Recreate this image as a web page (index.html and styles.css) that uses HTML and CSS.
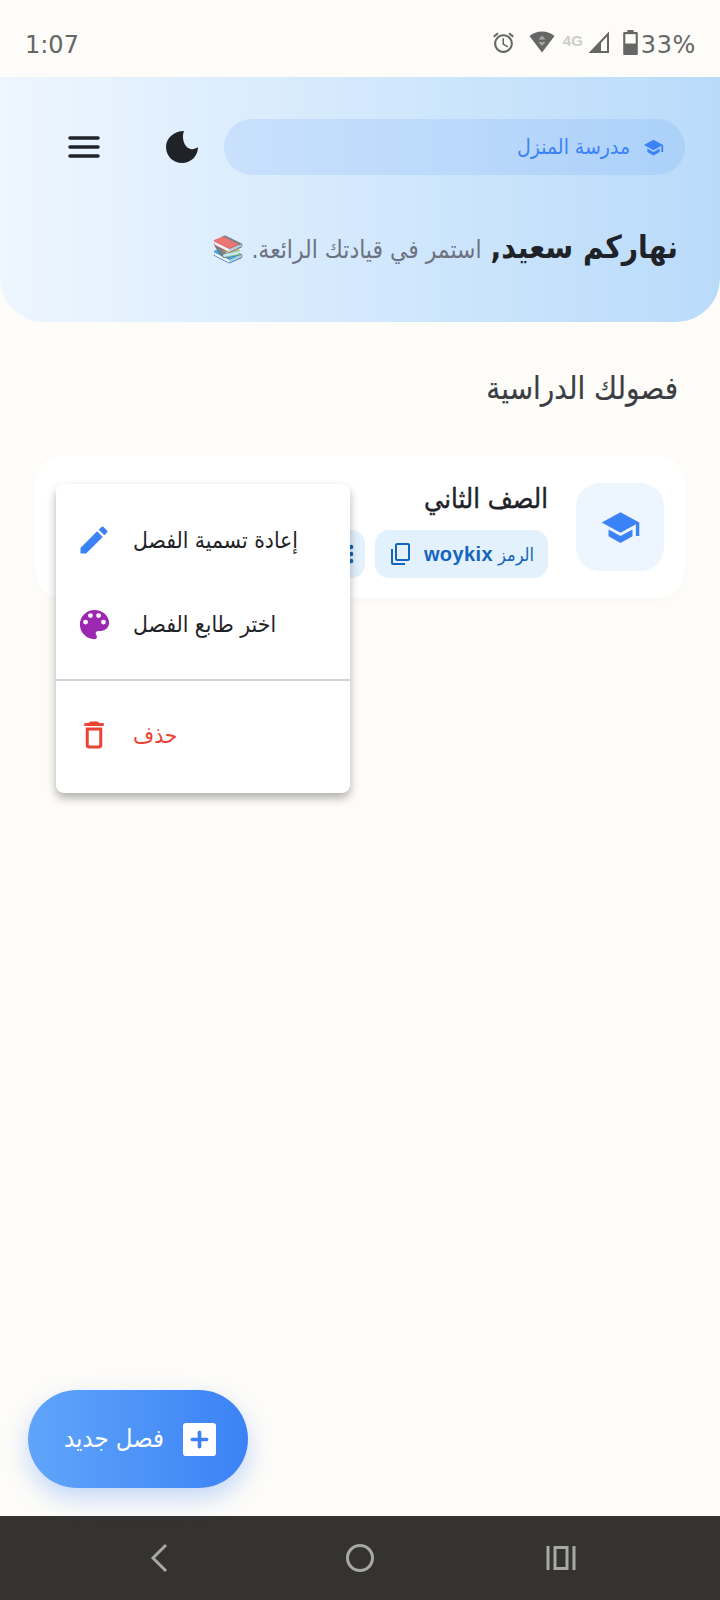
FILE: index.html
```html
<!DOCTYPE html>
<html lang="ar">
<head>
<meta charset="utf-8">
<title>مدرسة المنزل</title>
<link rel="stylesheet" href="styles.css">
</head>
<body>
<div class="screen">
  <div class="status" dir="ltr">
    <span class="time">1:07</span>
    <div class="status-icons">
      <svg class="alarm" viewBox="0 0 24 24" width="25" height="25"><path fill="#666" d="M22 5.720l-4-3.400-1.300 1.530 4 3.400L22 5.720zM7.300 3.850L6 2.320l-4 3.400 1.300 1.530 4-3.400zM12.500 8H11v6l4.750 2.850.75-1.230-4-2.370V8zM12 4c-4.970 0-9 4.030-9 9s4.030 9 9 9 9-4.030 9-9-4.030-9-9-9zm0 16c-3.870 0-7-3.130-7-7s3.130-7 7-7 7 3.130 7 7-3.130 7-7 7z"/></svg>
      <svg viewBox="0 0 26 22" width="26" height="22"><path fill="#666" d="M13 0.500C8 0.500 4 2 0.500 5L13 21.500 25.500 5C22 2 18 0.500 13 0.500z"/><path fill="#a5a5a3" d="M13 4.500l-3.500 4h7zM13 15l-3.500-4h7z"/></svg>
      <span class="net">4G</span>
      <svg class="sig" viewBox="0 0 22 22" width="22" height="22"><path fill="none" stroke="#666" stroke-width="2" d="M20 3V21H3z"/><path fill="#666" d="M1 22L13 10V22z"/></svg>
      <svg viewBox="0 0 14 24" width="15" height="25"><path fill="#666" d="M4 0h6v2h3a1 1 0 0 1 1 1v20a1 1 0 0 1-1 1H1a1 1 0 0 1-1-1V3a1 1 0 0 1 1-1h3z"/><rect x="2" y="4" width="10" height="9" fill="#fdfcf9"/></svg>
      <span class="pct">33%</span>
    </div>
  </div>

  <header class="hero" dir="rtl">
    <div class="topbar">
      <div class="brand">
        <svg viewBox="0 0 24 24" width="21" height="21"><path fill="#3b82f6" d="M5 13.180v4L12 21l7-3.820v-4L12 17l-7-3.820zM12 3L1 9l11 6 9-4.910V17h2V9L12 3z"/></svg>
        <span>مدرسة المنزل</span>
      </div>
      <svg class="moon" viewBox="0 0 34 34" width="34" height="34"><path fill="#1f2328" d="M19 1C9 1 1 8 1 17c0 9 7 16 16 16s16-7 16-16c-4 3-9 3-12-1-3-4-4-10-2-15z"/></svg>
      <svg class="menu-btn" viewBox="0 0 32 24" width="32" height="24"><path stroke="#1f2328" stroke-width="3.500" stroke-linecap="round" d="M2 3h28M2 12h28M2 21h28"/></svg>
    </div>
    <p class="greeting"><strong>نهاركم سعيد,</strong> <span>استمر في قيادتك الرائعة.</span> <span class="emoji">📚</span></p>
  </header>

  <main class="content" dir="rtl">
    <h2 class="section-title">فصولك الدراسية</h2>
    <article class="card">
      <div class="card-icon">
        <svg viewBox="0 0 24 24" width="41" height="41"><path fill="#3b82f6" d="M5 13.180v4L12 21l7-3.820v-4L12 17l-7-3.820zM12 3L1 9l11 6 9-4.910V17h2V9L12 3z"/></svg>
      </div>
      <div class="card-body">
        <h3 class="card-title">الصف الثاني</h3>
        <div class="chips">
          <div class="chip">
            <span class="chip-label">الرمز</span>
            <span class="chip-code">woykix</span>
            <svg viewBox="0 0 24 24" width="24" height="24"><path fill="#1565c0" d="M16 1H4c-1.100 0-2 .9-2 2v14h2V3h12V1zm3 4H8c-1.100 0-2 .9-2 2v14c0 1.100.9 2 2 2h11c1.100 0 2-.9 2-2V7c0-1.100-.9-2-2-2zm0 16H8V7h11v14z" transform="matrix(1 0 0 -1 0 24)"/></svg>
          </div>
          <div class="chip chip-more">
            <svg viewBox="0 0 24 24" width="28" height="28"><path fill="#1565c0" d="M12 8a2 2 0 1 0 0-4 2 2 0 0 0 0 4zm0 2a2 2 0 1 0 0 4 2 2 0 0 0 0-4zm0 6a2 2 0 1 0 0 4 2 2 0 0 0 0-4z"/></svg>
          </div>
        </div>
      </div>
    </article>
  </main>

  <div class="popup">
    <div class="popup-item">
      <svg viewBox="0 0 24 24" width="36" height="36"><path fill="#3b82f6" d="M3 17.250V21h3.750L17.810 9.940l-3.750-3.750L3 17.250zM20.710 7.040a1 1 0 0 0 0-1.410l-2.340-2.340a1 1 0 0 0-1.410 0l-1.830 1.830 3.750 3.750 1.830-1.830z"/></svg>
      <span class="popup-label">إعادة تسمية الفصل</span>
    </div>
    <div class="popup-item item-second">
      <svg class="palette" viewBox="0 0 24 24" width="39" height="39"><path fill="#9c27b0" d="M12 3a9 9 0 0 0 0 18c.83 0 1.500-.67 1.500-1.500 0-.39-.15-.74-.39-1.010-.23-.26-.38-.61-.38-.99 0-.83.67-1.500 1.500-1.500H16a5 5 0 0 0 5-5c0-4.420-4.030-8-9-8zm-5.500 9a1.500 1.500 0 1 1 0-3 1.500 1.500 0 0 1 0 3zm3-4a1.500 1.500 0 1 1 0-3 1.500 1.500 0 0 1 0 3zm5 0a1.500 1.500 0 1 1 0-3 1.500 1.500 0 0 1 0 3zm3 4a1.500 1.500 0 1 1 0-3 1.500 1.500 0 0 1 0 3z"/></svg>
      <span class="popup-label">اختر طابع الفصل</span>
    </div>
    <div class="popup-divider"></div>
    <div class="popup-item item-danger">
      <svg viewBox="0 0 24 24" width="36" height="36"><path fill="#ea4335" d="M6.500 19c0 1.100.9 2 2 2h7c1.100 0 2-.9 2-2V7h-11v12zM8.500 9h7v10h-7V9zm7-5l-1-1h-5l-1 1H5.500v2h13V4h-3z"/></svg>
      <span class="popup-label">حذف</span>
    </div>
  </div>

  <button class="fab" dir="rtl" type="button">
    <svg viewBox="0 0 32 32" width="33" height="33"><rect width="32" height="32" rx="3" fill="#fff"/><path stroke="#3b82f6" stroke-width="3.500" stroke-linecap="round" d="M16 9v14M9 16h14"/></svg>
    <span class="fab-label">فصل جديد</span>
  </button>

  <nav class="navbar">
    <svg viewBox="0 0 30 30" width="30" height="30"><path fill="none" stroke="#a8a8a6" stroke-width="3" d="M22 2L9 15l13 13"/></svg>
    <svg viewBox="0 0 30 30" width="30" height="30"><circle cx="15" cy="15" r="12.500" fill="none" stroke="#a8a8a6" stroke-width="3"/></svg>
    <svg viewBox="0 0 30 26" width="30" height="26"><path fill="none" stroke="#a8a8a6" stroke-width="3" d="M2 1v24M28 1v24M9 2.500h12v21H9z"/></svg>
  </nav>
</div>
</body>
</html>
```
FILE: styles.css
```css
* { box-sizing: border-box; }
html, body { margin: 0; padding: 0; }
body {
  width: 720px;
  height: 1600px;
  overflow: hidden;
  background: #fdfcf9;
  font-family: "DejaVu Sans", "Noto Sans", sans-serif;
  font-stretch: condensed;
}
.screen {
  position: relative;
  width: 720px;
  height: 1600px;
  display: flex;
  flex-direction: column;
}
.status {
  height: 77px;
  flex: none;
  display: flex;
  justify-content: space-between;
  align-items: center;
  padding: 13px 24px 0 25px;
  color: #666;
}
.time { font-size: 24px; font-stretch: normal; }
.status-icons { display: flex; align-items: center; gap: 10px; }
.status-icons svg { flex: none; margin-bottom: 6px; }
.status-icons .alarm { margin-right: 3px; }
.net {
  font: bold 15px "Liberation Sans", sans-serif;
  color: #ccc;
  margin: -10px -5px 0 -2px;
}
.status-icons .sig { margin-right: 3px; }
.pct { font-size: 24px; font-stretch: normal; letter-spacing: 0.6px; margin-left: -7px; }
.hero {
  flex: none;
  height: 245px;
  background: linear-gradient(90deg, #eef6ff 0%, #b9dbfa 100%);
  border-radius: 0 0 44px 44px;
  padding: 42px 35px 0;
}
.topbar { display: flex; align-items: center; }
.brand {
  width: 461px;
  height: 56px;
  flex: none;
  border-radius: 28px;
  background: rgba(59, 130, 246, 0.12);
  display: flex;
  align-items: center;
  gap: 13px;
  padding: 0 21px;
  color: #3b82f6;
  font-size: 21px;
}
.moon { margin-right: 25px; }
.menu-btn { margin-right: 65px; }
.greeting {
  margin: 47px 0 0;
  padding-right: 7px;
  color: #6b7280;
  font-size: 24.400px;
  line-height: 50px;
}
.greeting strong { color: #1f2328; font-size: 31.500px; font-weight: bold; margin-left: 2px; }
.emoji { opacity: 0.7; font-size: 26px; }
.content { flex: none; padding: 0 35px; }
.section-title {
  margin: 38px 0 0;
  padding-right: 7px;
  color: #3a3d42;
  font-size: 31px;
  font-weight: normal;
  line-height: 56px;
  -webkit-text-stroke: 0.2px #3a3d42;
}
.card {
  margin-top: 39px;
  height: 143px;
  background: #fff;
  border-radius: 28px;
  box-shadow: 0 2px 10px rgba(0, 0, 0, 0.02);
  display: flex;
  gap: 28px;
  padding: 28px 21px 0;
}
.card-icon {
  width: 88px;
  height: 88px;
  flex: none;
  border-radius: 24px;
  background: #edf5ff;
  display: flex;
  align-items: center;
  justify-content: center;
}
.card-title {
  margin: 0;
  color: #1f2328;
  font-size: 27px;
  font-weight: normal;
  line-height: 32px;
  -webkit-text-stroke: 0.4px #1f2328;
}
.chips { display: flex; gap: 10px; margin-top: 15px; }
.chip {
  height: 48px;
  width: 173px;
  flex: none;
  border-radius: 14px;
  background: #e3f1fd;
  display: flex;
  align-items: center;
  padding: 0 14px;
  color: #1565c0;
}
.chip svg { flex: none; }
.chip-label { font-size: 18px; margin-left: 5px; }
.chip-code { font: bold 20px "Liberation Sans", sans-serif; letter-spacing: 0.4px; margin-left: 11px; }
.chip-more { width: 100px; padding: 0; }
.popup {
  position: absolute;
  left: 56px;
  top: 484px;
  width: 294px;
  height: 309px;
  background: #fff;
  border-radius: 8px;
  box-shadow: 0 5px 10px rgba(0, 0, 0, 0.3);
  padding-top: 22px;
  z-index: 2;
}
.popup-item {
  display: flex;
  align-items: center;
  gap: 21px;
  height: 68px;
  padding: 0 20px;
  color: #1f2328;
  font-size: 22.700px;
}
.popup-label { direction: rtl; }
.palette { margin: 0 -1.500px; }
.item-second { margin-top: 16px; }
.popup-divider { height: 2px; background: #cfd2d8; margin-top: 21px; }
.item-danger { margin-top: 20px; color: #ea4335; }
.fab {
  position: absolute;
  left: 28px;
  top: 1390px;
  width: 220px;
  height: 98px;
  border: 0;
  border-radius: 49px;
  background: linear-gradient(90deg, #60a5fa, #3b82f6);
  box-shadow: 0 10px 25px rgba(59, 130, 246, 0.3);
  color: #fff;
  font-family: inherit;
  font-stretch: condensed;
  font-size: 25.500px;
  display: flex;
  align-items: center;
  justify-content: center;
  gap: 19px;
  padding: 0 0 0 4px;
}
.fab-label { margin-top: -2px; }
.navbar {
  margin-top: auto;
  height: 84px;
  flex: none;
  background: #343331;
  display: flex;
  align-items: center;
  justify-content: center;
  gap: 171px;
}
```
